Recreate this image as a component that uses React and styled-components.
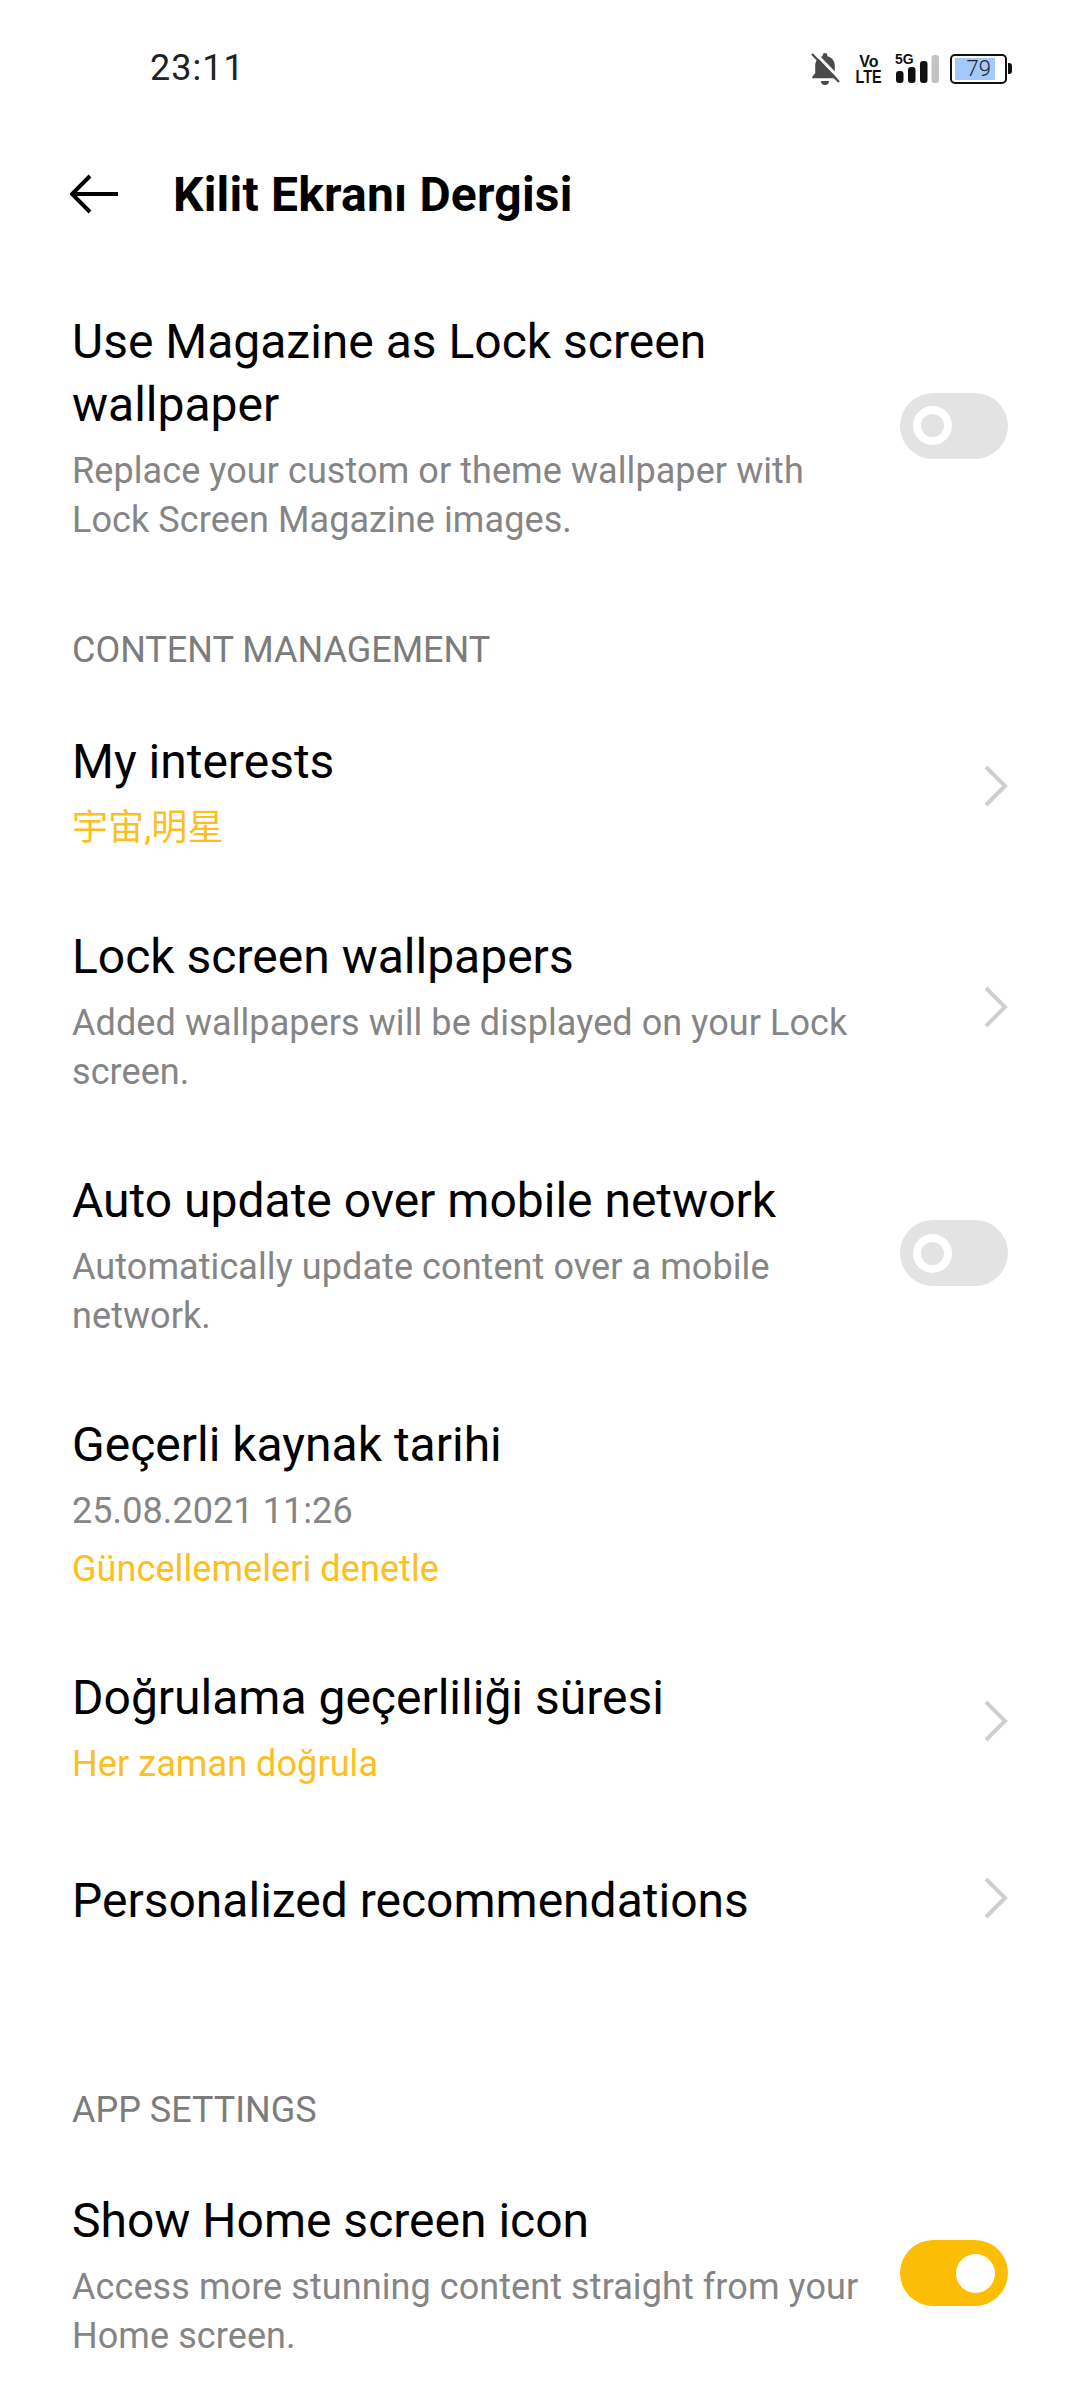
// Lock screen magazine settings page
import React from "react";
import styled, { createGlobalStyle } from "styled-components";

const GlobalStyle = createGlobalStyle`
  html, body {
    margin: 0;
    padding: 0;
    background: #fff;
  }
  body {
    font-family: Roboto, "Noto Sans CJK SC", sans-serif;
  }
`;

const Page = styled.div`
  width: 1080px;
  height: 2400px;
  background: #fff;
  overflow: hidden;
`;

const StatusBar = styled.div`
  height: 134px;
  display: flex;
  align-items: center;
  justify-content: space-between;
  padding: 0 73px 0 150px;
  box-sizing: border-box;
`;

const Time = styled.span`
  font-size: 36px;
  color: #222;
  letter-spacing: 1px;
  margin-top: 2px;
`;

const StatusIcons = styled.div`
  display: flex;
  align-items: center;
  margin-top: 4px;
`;

const VoLte = styled.div`
  width: 22px;
  height: 30px;
  margin-left: 18px;
  display: flex;
  flex-direction: column;
  align-items: center;
  font-family: "Liberation Sans", sans-serif;
  font-weight: 700;
  color: #111;
  & span {
    font-size: 16px;
    height: 15px;
    line-height: 15px;
  }
  & span:last-child {
    transform: scale(0.9, 1.1);
  }
`;

const Signal = styled.div`
  width: 43px;
  height: 30px;
  margin-left: 16px;
  position: relative;
`;

const FiveG = styled.span`
  position: absolute;
  left: -1px;
  top: -1px;
  font-family: "Liberation Sans", sans-serif;
  font-size: 14px;
  font-weight: 700;
  line-height: 12px;
  color: #111;
`;

const Battery = styled.div`
  width: 57px;
  height: 30px;
  margin-left: 11px;
  border: 2.5px solid #111;
  border-radius: 5px;
  box-sizing: border-box;
  padding: 2px 3px;
  display: flex;
  position: relative;
  &::after {
    content: "";
    position: absolute;
    right: -7px;
    top: 7px;
    width: 4px;
    height: 11px;
    background: #111;
    border-radius: 0 3px 3px 0;
  }
`;

const BatteryFill = styled.div`
  width: 85%;
  background: #a3c9fb;
  font-size: 22px;
  line-height: 21px;
  color: #222;
  font-weight: 300;
  text-align: right;
  padding-right: 4px;
  box-sizing: border-box;
  white-space: nowrap;
`;

const Header = styled.div`
  height: 120px;
  display: flex;
  align-items: center;
  padding-left: 70px;
`;

const BackIcon = styled.svg`
  width: 48px;
  height: 40px;
  flex-shrink: 0;
`;

const Title = styled.h1`
  margin: 0 0 0 55px;
  font-size: 48px;
  font-weight: 700;
  letter-spacing: 0.2px;
  color: #000;
`;

const List = styled.div`
  margin-top: 20px;
`;

const Row = styled.div`
  display: flex;
  align-items: center;
  padding: 36px 72px;
  margin-top: ${(p) => (p.$lowered ? "8px" : "0")};
`;

const RowText = styled.div`
  flex: 1;
  min-width: 0;
  padding-right: 30px;
`;

const RowTitle = styled.div`
  font-size: 48px;
  line-height: 63px;
  color: #000;
`;

const RowSub = styled.div`
  font-size: 36px;
  line-height: 49px;
  letter-spacing: 0.08px;
  margin-top: ${(p) => p.$gap ?? 11}px;
  color: ${(p) => (p.$accent ? "#fbbf24" : "#858585")};
`;

const SectionLabel = styled.div`
  font-size: 36px;
  line-height: 49px;
  color: #7c7c7c;
  text-transform: uppercase;
  padding: ${(p) => (p.$spaced ? "118px 72px 18px" : "45px 72px 19px")};
`;

const Switch = styled.div`
  width: 108px;
  height: 66px;
  border-radius: 33px;
  flex-shrink: 0;
  box-sizing: border-box;
  padding: 0 13px;
  margin-bottom: 4px;
  display: flex;
  align-items: center;
  justify-content: ${(p) => (p.$on ? "flex-end" : "flex-start")};
  background: ${(p) => (p.$on ? "#fbbe04" : "#e3e3e3")};
`;

const Knob = styled.div`
  width: 39px;
  height: 39px;
  border-radius: 50%;
  box-sizing: border-box;
  background: ${(p) => (p.$on ? "#fff" : "#e3e3e3")};
  border: ${(p) => (p.$on ? "0" : "8px solid #fff")};
`;

const Chevron = styled.svg`
  width: 24px;
  height: 44px;
  flex-shrink: 0;
  margin-bottom: ${(p) => p.$lift * 2}px;
`;

const ChevronIcon = ({ lift = 3 }) => (
  <Chevron viewBox="0 0 24 44" $lift={lift}>
    <path d="M2 3 L21 22 L2 41" fill="none" stroke="#cfcfcf" strokeWidth="4" />
  </Chevron>
);

const Toggle = ({ on }) => (
  <Switch $on={on}>
    <Knob $on={on} />
  </Switch>
);

const App = () => {
  return (
    <Page>
      <GlobalStyle />
      <StatusBar>
        <Time>23:11</Time>
        <StatusIcons>
          <svg width="30" height="34" viewBox="0 0 30 34">
            <path
              d="M15 1a2.4 2.4 0 0 1 2.4 2.4v.8c4.6 1 7.4 4.8 7.4 9.6v7.4l3 3.6v1.4H2.2v-1.4l3-3.6v-7.4c0-4.8 2.8-8.6 7.4-9.6v-.8A2.4 2.4 0 0 1 15 1zM11 29h8a4 4 0 0 1-8 0z"
              fill="#4a4a4a"
            />
            <path d="M4 0 L31 28" stroke="#fff" strokeWidth="3" />
            <path d="M2 2 L29 30" stroke="#4a4a4a" strokeWidth="2.2" />
          </svg>
          <VoLte>
            <span>Vo</span>
            <span>LTE</span>
          </VoLte>
          <Signal>
            <FiveG>5G</FiveG>
            <svg width="43" height="30" viewBox="0 0 43 30">
              <rect x="0" y="17" width="7.5" height="12" rx="3" fill="#111" />
              <rect x="12" y="13" width="7.5" height="16" rx="3" fill="#111" />
              <rect x="24" y="7" width="7.5" height="22" rx="3" fill="#111" />
              <rect x="35.5" y="1" width="7.5" height="28" rx="3" fill="#c4c4c4" />
            </svg>
          </Signal>
          <Battery>
            <BatteryFill>79</BatteryFill>
          </Battery>
        </StatusIcons>
      </StatusBar>

      <Header>
        <BackIcon viewBox="0 0 48 40">
          <path d="M20 2 L2 20 L20 38 M2 20 H48" fill="none" stroke="#000" strokeWidth="4" />
        </BackIcon>
        <Title>Kilit Ekranı Dergisi</Title>
      </Header>

      <List>
        <Row>
          <RowText>
            <RowTitle>Use Magazine as Lock screen wallpaper</RowTitle>
            <RowSub>Replace your custom or theme wallpaper with Lock Screen Magazine images.</RowSub>
          </RowText>
          <Toggle />
        </Row>

        <SectionLabel>Content management</SectionLabel>

        <Row>
          <RowText>
            <RowTitle>My interests</RowTitle>
            <RowSub $accent>宇宙,明星</RowSub>
          </RowText>
          <ChevronIcon lift={6} />
        </Row>
        <Row>
          <RowText>
            <RowTitle>Lock screen wallpapers</RowTitle>
            <RowSub>Added wallpapers will be displayed on your Lock screen.</RowSub>
          </RowText>
          <ChevronIcon lift={4} />
        </Row>
        <Row>
          <RowText>
            <RowTitle>Auto update over mobile network</RowTitle>
            <RowSub>Automatically update content over a mobile network.</RowSub>
          </RowText>
          <Toggle />
        </Row>
        <Row>
          <RowText>
            <RowTitle>Geçerli kaynak tarihi</RowTitle>
            <RowSub>25.08.2021 11:26</RowSub>
            <RowSub $accent $gap={9}>Güncellemeleri denetle</RowSub>
          </RowText>
        </Row>
        <Row>
          <RowText>
            <RowTitle>Doğrulama geçerliliği süresi</RowTitle>
            <RowSub $accent>Her zaman doğrula</RowSub>
          </RowText>
          <ChevronIcon lift={7} />
        </Row>
        <Row $lowered>
          <RowText>
            <RowTitle>Personalized recommendations</RowTitle>
          </RowText>
          <ChevronIcon lift={3} />
        </Row>

        <SectionLabel $spaced>App settings</SectionLabel>

        <Row>
          <RowText>
            <RowTitle>Show Home screen icon</RowTitle>
            <RowSub>Access more stunning content straight from your Home screen.</RowSub>
          </RowText>
          <Toggle on />
        </Row>
      </List>
    </Page>
  );
};

export default App;
